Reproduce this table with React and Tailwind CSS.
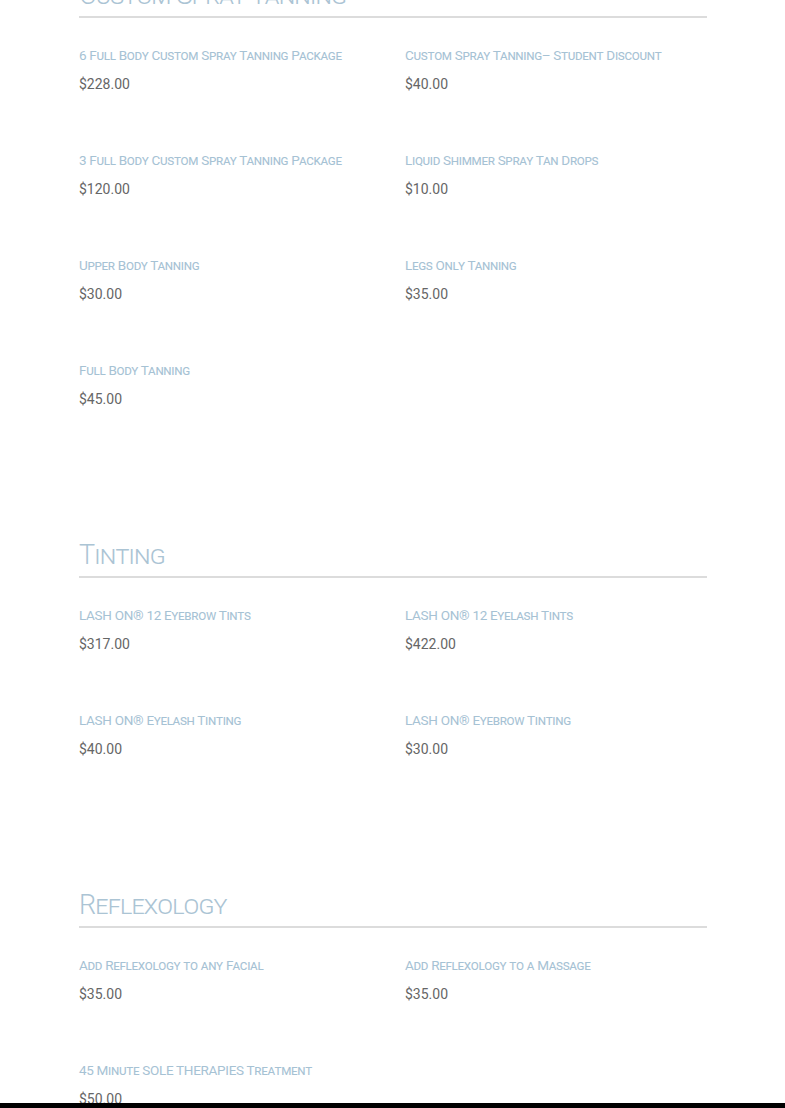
import React from "react";

const sections = [
  {
    title: "Custom Spray Tanning",
    items: [
      ["6 Full Body Custom Spray Tanning Package", "$228.00"],
      ["Custom Spray Tanning– Student Discount", "$40.00"],
      ["3 Full Body Custom Spray Tanning Package", "$120.00"],
      ["Liquid Shimmer Spray Tan Drops", "$10.00"],
      ["Upper Body Tanning", "$30.00"],
      ["Legs Only Tanning", "$35.00"],
      ["Full Body Tanning", "$45.00"],
    ],
  },
  {
    title: "Tinting",
    items: [
      ["LASH ON® 12 Eyebrow Tints", "$317.00"],
      ["LASH ON® 12 Eyelash Tints", "$422.00"],
      ["LASH ON® Eyelash Tinting", "$40.00"],
      ["LASH ON® Eyebrow Tinting", "$30.00"],
    ],
  },
  {
    title: "Reflexology",
    items: [
      ["Add Reflexology to any Facial", "$35.00"],
      ["Add Reflexology to a Massage", "$35.00"],
      ["45 Minute SOLE THERAPIES Treatment", "$50.00"],
    ],
  },
];

function Item({ name, price }) {
  return (
    <div className="flex flex-col">
      <a className="text-[13.5px] leading-[20px] text-[#a6c2d4] [font-variant:small-caps] tracking-[-0.3px] whitespace-nowrap">
        {name}
      </a>
      <div className="mt-[9px] text-[14px] leading-[20px] text-[#666666]">{price}</div>
    </div>
  );
}

export default function App() {
  return (
    <div
      className="min-h-screen bg-white"
      style={{ fontFamily: "Roboto, 'Liberation Sans', sans-serif" }}
    >
      <div className="flex flex-col -mt-6 px-[79px] pr-[78px] gap-[127px]">
        {sections.map((s) => (
          <section key={s.title} className="flex flex-col">
            <h2 className="text-[27px] leading-[36px] font-light text-[#abc4d4] [font-variant:small-caps] tracking-[-0.8px] pt-[1px] pb-[3px] border-b-2 border-[#dcdcdc]">
              {s.title}
            </h2>
            <div className="mt-[27px] grid grid-cols-2 gap-x-6 gap-y-[56px]">
              {s.items.map(([n, p]) => (
                <Item key={n} name={n} price={p} />
              ))}
            </div>
          </section>
        ))}
      </div>
      <div className="fixed bottom-0 left-0 w-full h-[5px] bg-black" />
    </div>
  );
}
